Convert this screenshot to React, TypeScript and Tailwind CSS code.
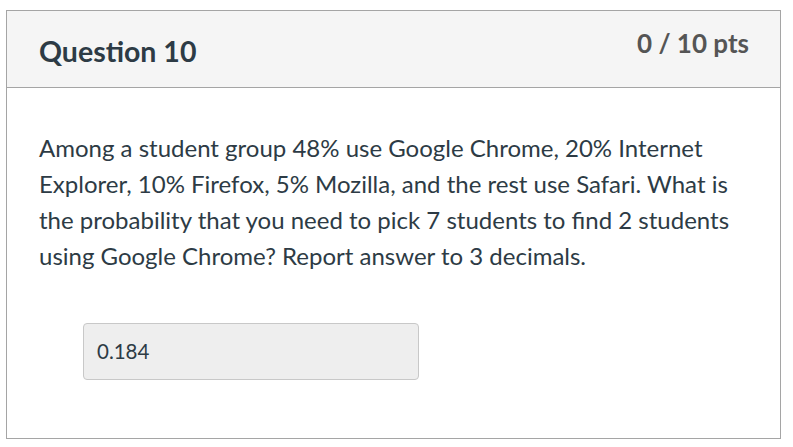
export default function App() {
  return (
    <div className="min-h-screen bg-white pt-[10px] pl-[6px] font-['Lato',sans-serif] text-[#2d3b45]">
      <div className="w-[775px] h-[429px] border border-[#a5a5a5] flex flex-col">
        <div className="h-[77px] bg-[#f5f5f5] border-b border-[#a5a5a5] flex justify-between pl-[32px] pr-[31px]">
          <h2 className="pt-[22px] text-[28.5px] font-bold leading-[36px]">Question 10</h2>
          <div className="pt-[16px] text-[26px] font-bold leading-[32px] text-[#555555]">0 / 10 pts</div>
        </div>
        <div className="pt-[42px] pl-[32px] pr-[40px]">
          <p className="text-[24px] leading-[36px]">
            Among a student group 48% use Google Chrome, 20% Internet Explorer, 10% Firefox, 5% Mozilla, and the rest
            use Safari. What is the probability that you need to pick 7 students to find 2 students using Google
            Chrome? Report answer to 3 decimals.
          </p>
          <div className="mt-[49px] ml-[44px] w-[336px] h-[57px] rounded-[4px] border border-[#c8c8c8] bg-[#eeeeee] flex items-center pl-[13px] text-[20.5px]">
            0.184
          </div>
        </div>
      </div>
    </div>
  );
}
